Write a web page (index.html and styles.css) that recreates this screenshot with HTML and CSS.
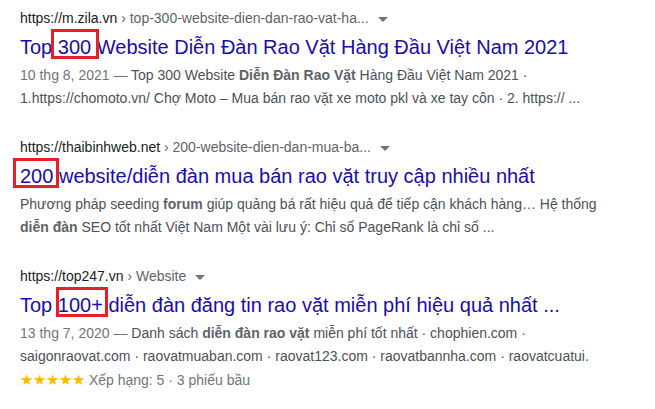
FILE: index.html
```html
<!DOCTYPE html>
<html lang="vi">
<head>
<meta charset="utf-8"/>
<meta content="width=device-width, initial-scale=1.0" name="viewport"/>
<title>Kết quả tìm kiếm</title>
<link rel="stylesheet" href="styles.css">
</head>
<body>
<main class="results">
<div class="result">
<div class="cite"><span class="host">https://m.zila.vn</span> › top-300-website-dien-dan-rao-vat-ha... <span class="caret"></span></div>
<h3 class="title"><a href="#">Top <span class="mark mark-a">300</span> Website Diễn Đàn Rao Vặt Hàng Đầu Việt Nam 2021</a></h3>
<p class="snippet"><span class="date">10 thg 8, 2021 — </span>Top 300 Website <b>Diễn Đàn Rao Vặt</b> Hàng Đầu Việt Nam 2021 ·<br>1.https://chomoto.vn/ Chợ Moto – Mua bán rao vặt xe moto pkl và xe tay côn · 2. https:// ...</p>
</div>
<div class="result">
<div class="cite"><span class="host">https://thaibinhweb.net</span> › 200-website-dien-dan-mua-ba... <span class="caret"></span></div>
<h3 class="title"><a href="#"><span class="mark mark-b">200</span> website/diễn đàn mua bán rao vặt truy cập nhiều nhất</a></h3>
<p class="snippet">Phương pháp seeding <b>forum</b> giúp quảng bá rất hiệu quả để tiếp cận khách hàng… Hệ thống<br><b>diễn đàn</b> SEO tốt nhất Việt Nam Một vài lưu ý: Chỉ số PageRank là chỉ số ...</p>
</div>
<div class="result">
<div class="cite"><span class="host">https://top247.vn</span> › Website <span class="caret"></span></div>
<h3 class="title"><a href="#">Top <span class="mark mark-c">100+</span> diễn đàn đăng tin rao vặt miễn phí hiệu quả nhất ...</a></h3>
<p class="snippet"><span class="date">13 thg 7, 2020 — </span>Danh sách <b>diễn đàn rao vặt</b> miễn phí tốt nhất · chophien.com ·<br>saigonraovat.com · raovatmuaban.com · raovat123.com · raovatbannha.com · raovatcuatui.</p>
<div class="rating"><span class="stars">★★★★★</span> Xếp hạng: 5 · 3 phiếu bầu</div>
</div>
</main>
</body>
</html>
```
FILE: styles.css
```css
* {
  box-sizing: border-box;
}

body {
  font-family: Arial, 'Liberation Sans', sans-serif;
  margin: 0;
  padding: 0;
  background-color: #fff;
  color: #4d5156;
}

.results {
  padding: 7px 20px 0 20px;
  width: 620px;
}

.result {
  margin-bottom: 26px;
}

.cite {
  font-size: 14px;
  line-height: 22px;
  color: #5f6368;
  white-space: nowrap;
}

.cite .host {
  color: #202124;
}

.caret {
  display: inline-block;
  margin-left: 5px;
  vertical-align: middle;
  border-left: 5px solid transparent;
  border-right: 5px solid transparent;
  border-top: 5px solid #70757a;
}

.title {
  margin: 0;
  padding-top: 5px;
  font-size: 20px;
  font-weight: 400;
  line-height: 26px;
  white-space: nowrap;
}

.title a {
  color: #1a0dab;
  text-decoration: none;
}

.mark {
  position: relative;
}

.mark::after {
  content: "";
  position: absolute;
  border: 3px solid #e5202a;
}

.mark-a::after {
  left: -7px;
  right: -8px;
  top: -7px;
  bottom: -1px;
}

.mark-b::after {
  left: -7px;
  right: -6px;
  top: -7px;
  bottom: -1px;
}

.mark-c::after {
  left: -2px;
  right: -5px;
  top: -7px;
  bottom: -1px;
}

.snippet {
  margin: 4px 0 0 0;
  font-size: 14px;
  line-height: 23px;
  white-space: nowrap;
}

.snippet b {
  color: #5f6368;
}

.date {
  color: #70757a;
}

.rating {
  font-size: 14px;
  line-height: 23px;
  color: #70757a;
}

.stars {
  color: #fbbc04;
  font-size: 15px;
}
```
